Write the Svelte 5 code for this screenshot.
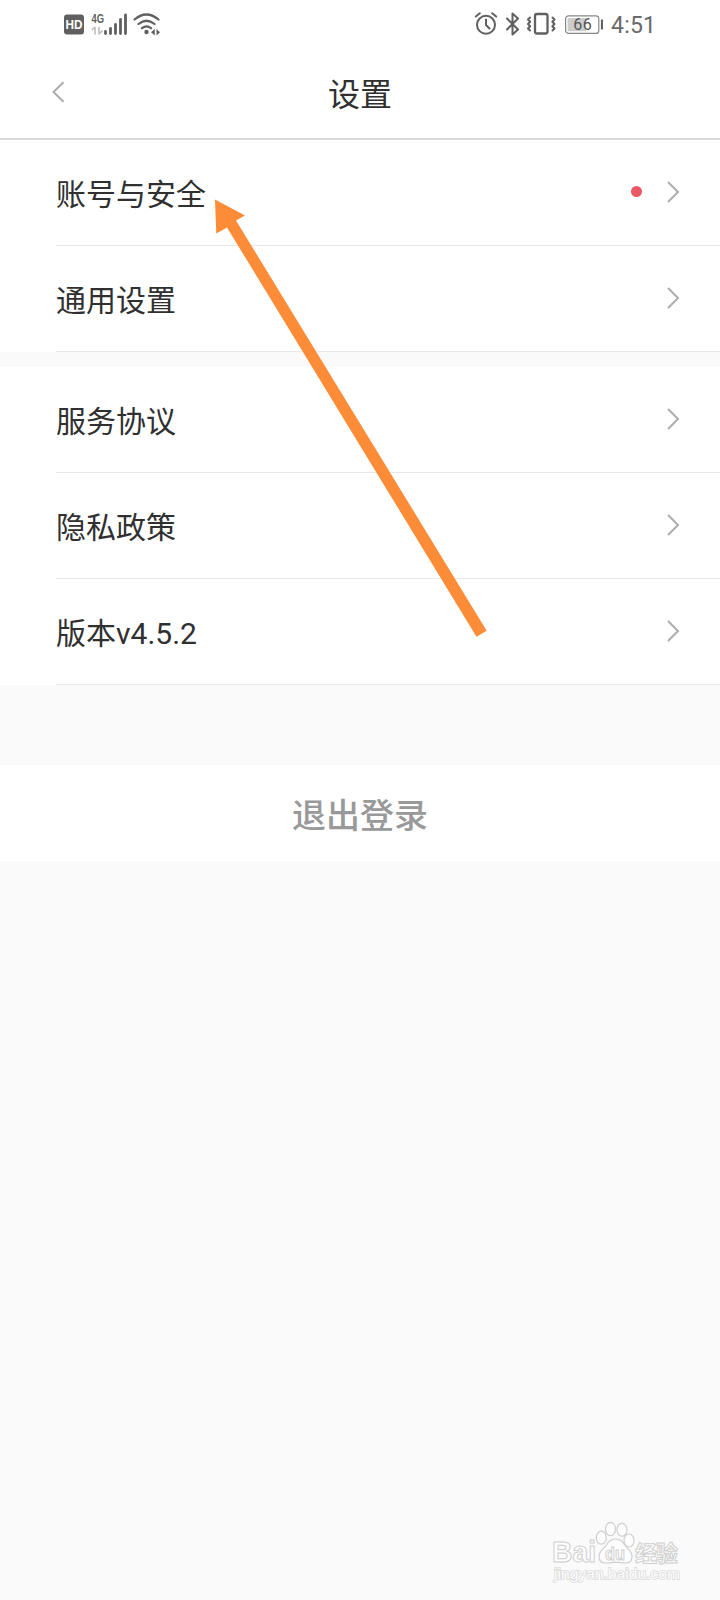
<script>
    const groups = [
        [
            { label: '账号与安全', dot: true },
            { label: '通用设置' }
        ],
        [
            { label: '服务协议' },
            { label: '隐私政策' },
            { label: '版本v4.5.2' }
        ]
    ];
</script>

<div class="screen">
    <div class="status">
        <svg class="signals" width="104" height="28" viewBox="0 0 104 28">
            <rect x="1" y="4.500" width="20" height="20" rx="3" fill="#606060" />
            <text x="11" y="19.300" class="hd" text-anchor="middle" textLength="17" lengthAdjust="spacingAndGlyphs">HD</text>
            <text x="28.500" y="12.600" class="net" textLength="12.500" lengthAdjust="spacingAndGlyphs">4G</text>
            <path d="M32 17v7.500M32 17l-3 3M36 17v7.500M36 24l3.500-3.500" stroke="#bdbdbd" stroke-width="1.600" fill="none" />
            <path d="M42.500 21.500v2M47.500 18.500v5M52.500 14.500v9M57.500 9.500v14M62.500 5v18.500" stroke="#606060" stroke-width="2.800" stroke-linecap="round" />
            <path d="M71.500 9.500Q83.500-.5 95.500 9.500M75.500 14Q83.500 7.500 91.500 14M79 18.200Q83.500 14.500 88 18.200" stroke="#606060" stroke-width="2.200" fill="none" stroke-linecap="round" />
            <circle cx="83.500" cy="22" r="2.200" fill="#606060" />
            <path d="M91.800 19v6.500l-3.800-3.200zM93.500 19v6.500l3.500-3.200z" fill="#606060" />
        </svg>
        <div class="right">
            <svg width="90" height="28" viewBox="0 0 90 28">
                <g fill="none" stroke="#606060" stroke-width="2" stroke-linecap="round" stroke-linejoin="round">
                    <circle cx="12" cy="14.800" r="9" />
                    <path d="M12 9.500v5.500l3.500 3.500M1.800 6.500l4-3.300M18.200 3.200l4 3.300" />
                    <path d="M33 8.500l11 11-5.500 5V3.500l5.500 5-11 11" />
                    <rect x="61" y="4" width="12.500" height="19.500" rx="2" stroke-width="2.300" />
                    <path d="M56 7.500l-2 2 2.200 2.200-2.200 2.300 2.200 2.200-2.200 2.300 2 2M78.500 7.500l2 2-2.200 2.200 2.200 2.300-2.200 2.200 2.200 2.300-2 2" />
                </g>
            </svg>
            <svg class="battery" width="39" height="20" viewBox="0 0 39 20">
                <rect x="1.600" y=".8" width="33.200" height="17.600" rx="3" fill="#fff" stroke="#888" stroke-width="1.200" />
                <rect x="3.600" y="3" width="18.500" height="13.200" fill="#ccc" />
                <path d="M38 4.500v10" stroke="#606060" stroke-width="2.200" />
                <text x="18.500" y="15" text-anchor="middle" class="level" textLength="18.500">66</text>
            </svg>
            <span class="time">4:51</span>
        </div>
    </div>

    <header>
        <svg class="back" width="14" height="22" viewBox="0 0 14 22">
            <path d="M11.500 1.200L1.500 11l10 9.800" />
        </svg>
        <h1>设置</h1>
    </header>

    {#each groups as rows}
        <ul>
            {#each rows as row}
                <li>
                    <span class="label">{row.label}</span>
                    {#if row.dot}<i class="dot"></i>{/if}
                    <svg class="chevron" width="14" height="22" viewBox="0 0 14 22">
                        <path d="M2 1l10 10-10 10" />
                    </svg>
                </li>
            {/each}
        </ul>
    {/each}

    <button class="logout">退出登录</button>

    <svg class="arrow" width="280" height="450" viewBox="210 195 280 450">
        <path d="M215 199.500L245 215.500L236 220.500L486.700 630.700L476.500 636.700L227 227.500L216.300 233.500Z" />
    </svg>

    <svg class="watermark" width="136" height="66" viewBox="0 0 136 66">
        <g fill="#fdfdfd" stroke="#cfcfcf" stroke-width="1.200">
            <text x="0" y="42" class="brand" textLength="44" lengthAdjust="spacingAndGlyphs">Bai</text>
            <ellipse cx="49.300" cy="17.700" rx="5" ry="6.500" />
            <ellipse cx="58.500" cy="9" rx="5" ry="6.700" />
            <ellipse cx="70" cy="9.800" rx="5" ry="6.500" />
            <ellipse cx="77" cy="20.500" rx="5" ry="6.500" />
            <path d="M63.500 19c-5 0-7 3-9.500 6.500-3 4-7 6-7 11 0 4.500 3 6.500 7 6.500s5.500-.8 9.500-.8 6 .8 10 .8c4.500 0 6.500-2.500 6.500-6.500 0-5-4-7-7-11C70.500 22 68.500 19 63.500 19z" />
            <text x="53" y="40" class="du" textLength="20" lengthAdjust="spacingAndGlyphs">du</text>
            <text x="83" y="41" class="cn" textLength="43">经验</text>
            <text x="2" y="58.500" class="url" textLength="126" lengthAdjust="spacingAndGlyphs">jingyan.baidu.com</text>
        </g>
    </svg>
</div>

<style>
    :global(body) {
        background: #fafafa;
    }
    .screen {
        position: relative;
        width: 720px;
        height: 1600px;
        background: #fafafa;
        color: #303030;
        font-family: Roboto, "Noto Sans CJK SC", sans-serif;
    }
    .status {
        display: flex;
        justify-content: space-between;
        height: 48px;
        padding: 10px 65px 0 63px;
        box-sizing: border-box;
        background: #fff;
    }
    .right {
        display: flex;
        width: 181px;
        height: 28px;
    }
    .right svg {
        flex: none;
    }
    .battery {
        margin-top: 5px;
    }
    .hd {
        font: bold 13.5px "Liberation Sans", sans-serif;
        fill: #fff;
    }
    .net {
        font: bold 13px "Liberation Sans", sans-serif;
        fill: #606060;
    }
    .level {
        font: 16px Roboto, sans-serif;
        fill: #555;
    }
    .time {
        flex: none;
        margin-left: 8px;
        font-size: 23px;
        line-height: 31px;
        letter-spacing: 0.2px;
        color: #696969;
    }
    header {
        display: grid;
        grid-template-columns: 1fr auto 1fr;
        align-items: center;
        height: 92px;
        padding-left: 52px;
        padding-right: 52px;
        box-sizing: border-box;
        border-bottom: 2px solid #d9d9d9;
        background: #fff;
    }
    h1 {
        margin: 0;
        padding-top: 4px;
        font-size: 32px;
        font-weight: 400;
        line-height: 48px;
    }
    .back,
    .chevron {
        margin-bottom: 2px;
        fill: none;
        stroke: #adadad;
        stroke-width: 2;
    }
    ul {
        margin: 0 0 15px;
        padding: 0 0 0 56px;
        list-style: none;
        background: #fff;
    }
    li {
        display: flex;
        align-items: center;
        height: 106px;
        padding-right: 40.5px;
        box-sizing: border-box;
        border-bottom: 1px solid #e8e8e8;
    }
    .label {
        flex: 1;
        padding-top: 4px;
        font-size: 30px;
        line-height: 44px;
    }
    .dot {
        width: 11px;
        height: 11px;
        margin-right: 24px;
        margin-bottom: 2px;
        border-radius: 50%;
        background: #ec5766;
    }
    .logout {
        display: block;
        width: 100%;
        height: 96px;
        margin-top: 80px;
        padding: 0;
        border: 0;
        background: #fff;
        color: #999;
        font-family: inherit;
        font-size: 34px;
        font-weight: 500;
    }
    .arrow {
        position: absolute;
        left: 210px;
        top: 195px;
        fill: #fc8c38;
        pointer-events: none;
    }
    .watermark {
        position: absolute;
        left: 552px;
        top: 1520px;
    }
    .watermark text {
        stroke-width: 1;
    }
    .brand {
        font: bold 29px "Liberation Sans", sans-serif;
    }
    .du {
        font: bold 19px "Liberation Sans", sans-serif;
    }
    .cn {
        font: bold 22px "Noto Sans CJK SC", sans-serif;
    }
    .watermark .url {
        font: 15px "Liberation Sans", sans-serif;
        paint-order: stroke;
        stroke: #dadada;
        stroke-width: 1.6;
    }
</style>
